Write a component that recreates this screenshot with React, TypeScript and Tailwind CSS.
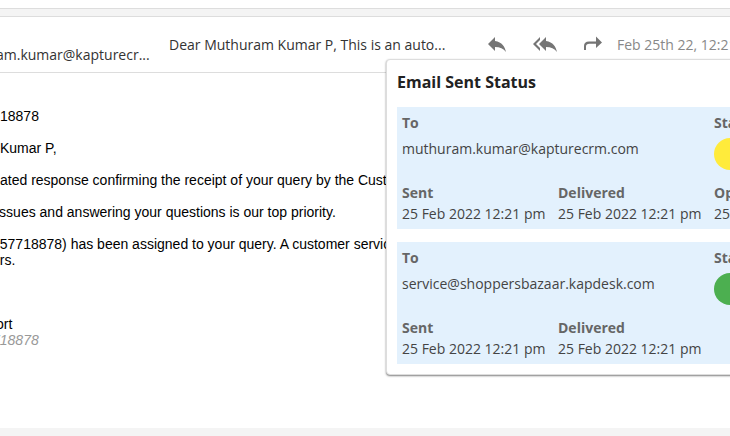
import { MdReply, MdReplyAll } from "react-icons/md";

type Delivery = {
  to: string;
  pill: string;
  sent: string;
  delivered: string;
  opened?: string;
};

const deliveries: Delivery[] = [
  {
    to: "muthuram.kumar@kapturecrm.com",
    pill: "bg-[#ffeb3b]",
    sent: "25 Feb 2022 12:21 pm",
    delivered: "25 Feb 2022 12:21 pm",
    opened: "25 Feb 2022 12:21 pm",
  },
  {
    to: "service@shoppersbazaar.kapdesk.com",
    pill: "bg-[#4caf50]",
    sent: "25 Feb 2022 12:21 pm",
    delivered: "25 Feb 2022 12:21 pm",
  },
];

function ForwardIcon() {
  return (
    <svg viewBox="0 0 18 16" className="w-[18px] h-4" fill="currentColor" aria-hidden="true">
      <path d="M12 0.5l6 6-6 5.5V7.7H5.5Q2 7.7 2 10.5V14H0v-4Q0 5.5 5 5.5h7z" />
    </svg>
  );
}

function Field({ label, value }: { label: string; value?: string }) {
  return (
    <div>
      <dt className="font-bold text-[#666]">{label}</dt>
      <dd>{value}</dd>
    </div>
  );
}

function DeliveryCard({ item }: { item: Delivery }) {
  return (
    <dl className="grid grid-cols-[156px_156px_156px] gap-y-3 bg-[#e3f1fd] p-[5px] whitespace-nowrap">
      <div className="col-span-2">
        <dt className="font-bold text-[#666]">To</dt>
        <dd className="mt-[5px]">{item.to}</dd>
      </div>
      <div>
        <dt className="font-bold text-[#666]">Status</dt>
        <dd className={`mt-[5px] h-8 w-24 rounded-full ${item.pill}`} />
      </div>
      <Field label="Sent" value={item.sent} />
      <Field label="Delivered" value={item.delivered} />
      {item.opened && <Field label="Opened" value={item.opened} />}
    </dl>
  );
}

function StatusPopup() {
  return (
    <section className="absolute left-[386px] top-[42px] z-10 rounded border border-[#ddd] bg-white px-[10px] pt-3 pb-[10px] leading-[21px] text-[#444] shadow-[0_1px_2px_rgba(0,0,0,0.5)]">
      <h2 className="text-base leading-[21px] font-bold text-[#222]">Email Sent Status</h2>
      <div className="mt-[14px] flex flex-col gap-[13px]">
        {deliveries.map((item) => (
          <DeliveryCard key={item.to} item={item} />
        ))}
      </div>
    </section>
  );
}

function MailHeader() {
  return (
    <header className="relative flex h-14 items-start border-b border-[#ddd] whitespace-nowrap text-[#333]">
      <div className="-ml-1 w-[173px] shrink-0 pt-7 leading-5">am.kumar@kapturecr...</div>
      <div className="w-[316px] shrink-0 pt-[18px] leading-5">
        Dear Muthuram Kumar P, This is an auto...
      </div>
      <div className="flex shrink-0 items-center gap-6 pt-[15px] text-[#757575]">
        <button type="button" aria-label="Reply">
          <MdReply size={24} />
        </button>
        <button type="button" aria-label="Reply all">
          <MdReplyAll size={24} />
        </button>
        <button type="button" aria-label="Forward" className="flex size-6 items-center justify-center">
          <ForwardIcon />
        </button>
      </div>
      <time className="ml-3 shrink-0 pt-[18px] leading-5 text-[#888]">Feb 25th 22, 12:21</time>
      <StatusPopup />
    </header>
  );
}

export default function App() {
  return (
    <div className="min-h-screen overflow-hidden bg-[#f4f4f4] font-['Open_Sans',sans-serif] text-sm">
      <div className="h-[9px] border-b border-[#ddd] bg-white" />
      <main className="mt-[7px] border-t border-[#ddd] bg-white pb-20">
        <MailHeader />
        <article className="flex flex-col gap-4 pt-[35px] font-['Liberation_Sans',sans-serif] leading-4 whitespace-nowrap text-black">
          <p>18878</p>
          <p>Kumar P,</p>
          <p>ated response confirming the receipt of your query by the Cust</p>
          <p className="-ml-1">issues and answering your questions is our top priority.</p>
          <p className="-ml-2">
            457718878) has been assigned to your query. A customer servic
            <br />
            ers.
          </p>
          <div className="pt-8">
            <p className="-ml-1">ort</p>
            <p className="-ml-2 text-[#999] italic">718878</p>
          </div>
        </article>
      </main>
    </div>
  );
}
